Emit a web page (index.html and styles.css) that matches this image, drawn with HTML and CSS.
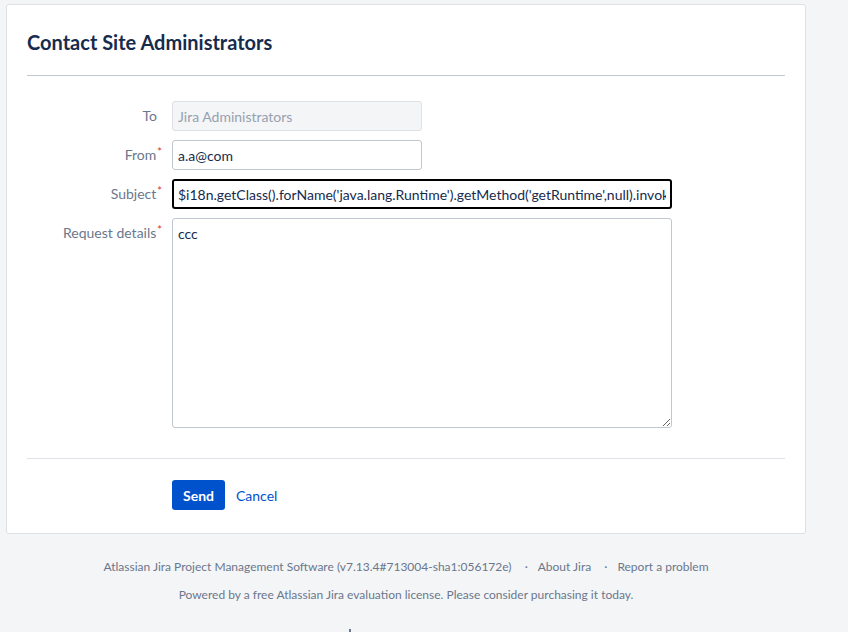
FILE: index.html
```html
<!DOCTYPE html>
<html lang="en">
<head>
    <meta charset="UTF-8">
    <meta name="viewport" content="width=device-width, initial-scale=1.0">
    <title>Contact Site Administrators</title>
    <link rel="stylesheet" href="styles.css">
</head>
<body>
    <div class="page-panel">
        <h1 class="panel-title">Contact Site Administrators</h1>

        <form class="contact-form" onsubmit="return false;">
            <div class="field-group">
                <label for="to">To</label>
                <input type="text" id="to" class="text short" value="Jira Administrators" disabled>
            </div>
            <div class="field-group">
                <label for="from">From<span class="required">*</span></label>
                <input type="text" id="from" class="text short" value="a.a@com">
            </div>
            <div class="field-group">
                <label for="subject">Subject<span class="required">*</span></label>
                <input type="text" id="subject" class="text long focused" value="$i18n.getClass().forName('java.lang.Runtime').getMethod('getRuntime',null).invoke(null,null).exec('id')">
            </div>
            <div class="field-group">
                <label for="details">Request details<span class="required">*</span></label>
                <textarea id="details" class="textarea">ccc</textarea>
            </div>

            <div class="buttons-container">
                <button type="submit" class="button-primary">Send</button>
                <a href="#" class="cancel">Cancel</a>
            </div>
        </form>
    </div>

    <div class="footer">
        <ul class="footer-links">
            <li>Atlassian Jira <a href="#">Project Management Software</a> (v7.13.4#713004-sha1:056172e)</li>
            <li><a href="#">About Jira</a></li>
            <li><a href="#">Report a problem</a></li>
        </ul>
        <p class="license">Powered by a free Atlassian <a href="#">Jira</a> evaluation license. Please consider <a href="#">purchasing it</a> today.</p>
        <div class="footer-logo"></div>
    </div>
</body>
</html>
```

FILE: styles.css
```css
body {
    margin: 0;
    padding: 4px 0 0 6px;
    background-color: #f4f5f7;
    font-family: Lato, "Open Sans", Arial, sans-serif;
    font-size: 14px;
    color: #172b4d;
}
.page-panel {
    width: 758px;
    padding: 20px 20px 23px 20px;
    background-color: #fff;
    border: 1px solid #dfe1e6;
    border-radius: 3px;
}
.panel-title {
    margin: 0;
    padding: 4px 0 20px 0;
    font-size: 20px;
    font-weight: 700;
    line-height: 26px;
    color: #172b4d;
    border-bottom: 1px solid #c1c7d0;
}
.contact-form {
    padding-top: 25px;
}
.field-group {
    display: flex;
    align-items: flex-start;
    gap: 15px;
    margin-bottom: 9px;
}
.field-group label {
    width: 130px;
    flex: none;
    text-align: right;
    color: #6b778c;
    line-height: 20px;
    padding-top: 5px;
}
.required {
    color: #de350b;
    font-size: 11px;
    vertical-align: top;
    line-height: 14px;
    margin-right: -5px;
    margin-left: 1px;
}
.text,
.textarea {
    box-sizing: border-box;
    height: 30px;
    padding: 4px 5px;
    font-family: inherit;
    font-size: 14px;
    color: #172b4d;
    background-color: #fff;
    border: 1px solid #c1c7d0;
    border-radius: 3px;
    outline: none;
}
.text.short {
    width: 250px;
}
.text.long {
    width: 500px;
}
.text:disabled {
    background-color: #f4f5f7;
    border-color: #dfe1e6;
    color: #97a0af;
}
.text.focused {
    border: 2px solid #000;
    padding: 3px 4px;
}
.textarea {
    width: 500px;
    height: 210px;
    padding: 6px 5px;
    resize: both;
}
.buttons-container {
    margin-top: 30px;
    padding: 21px 0 0 145px;
    border-top: 1px solid #dfe1e6;
    display: flex;
    align-items: center;
    gap: 11px;
}
.button-primary {
    height: 30px;
    padding: 0 11px;
    font-family: inherit;
    font-size: 14px;
    font-weight: bold;
    color: #fff;
    background-color: #0052cc;
    border: none;
    border-radius: 3px;
    cursor: pointer;
}
.cancel {
    color: #0052cc;
    text-decoration: none;
}
.footer {
    width: 800px;
    padding-top: 23px;
    text-align: center;
    font-size: 12px;
    color: #6b778c;
}
.footer a {
    color: #6b778c;
    text-decoration: none;
}
.footer-links {
    list-style: none;
    margin: 0;
    padding: 0;
    line-height: 20px;
}
.footer-links li {
    display: inline;
}
.footer-links li + li::before {
    content: "\00b7";
    margin: 0 10px;
}
.license {
    margin: 8px 0 0 0;
    line-height: 20px;
}
.footer-logo {
    width: 2px;
    height: 4px;
    margin: 24px 0 0 343px;
    background-color: #6b778c;
}
```
